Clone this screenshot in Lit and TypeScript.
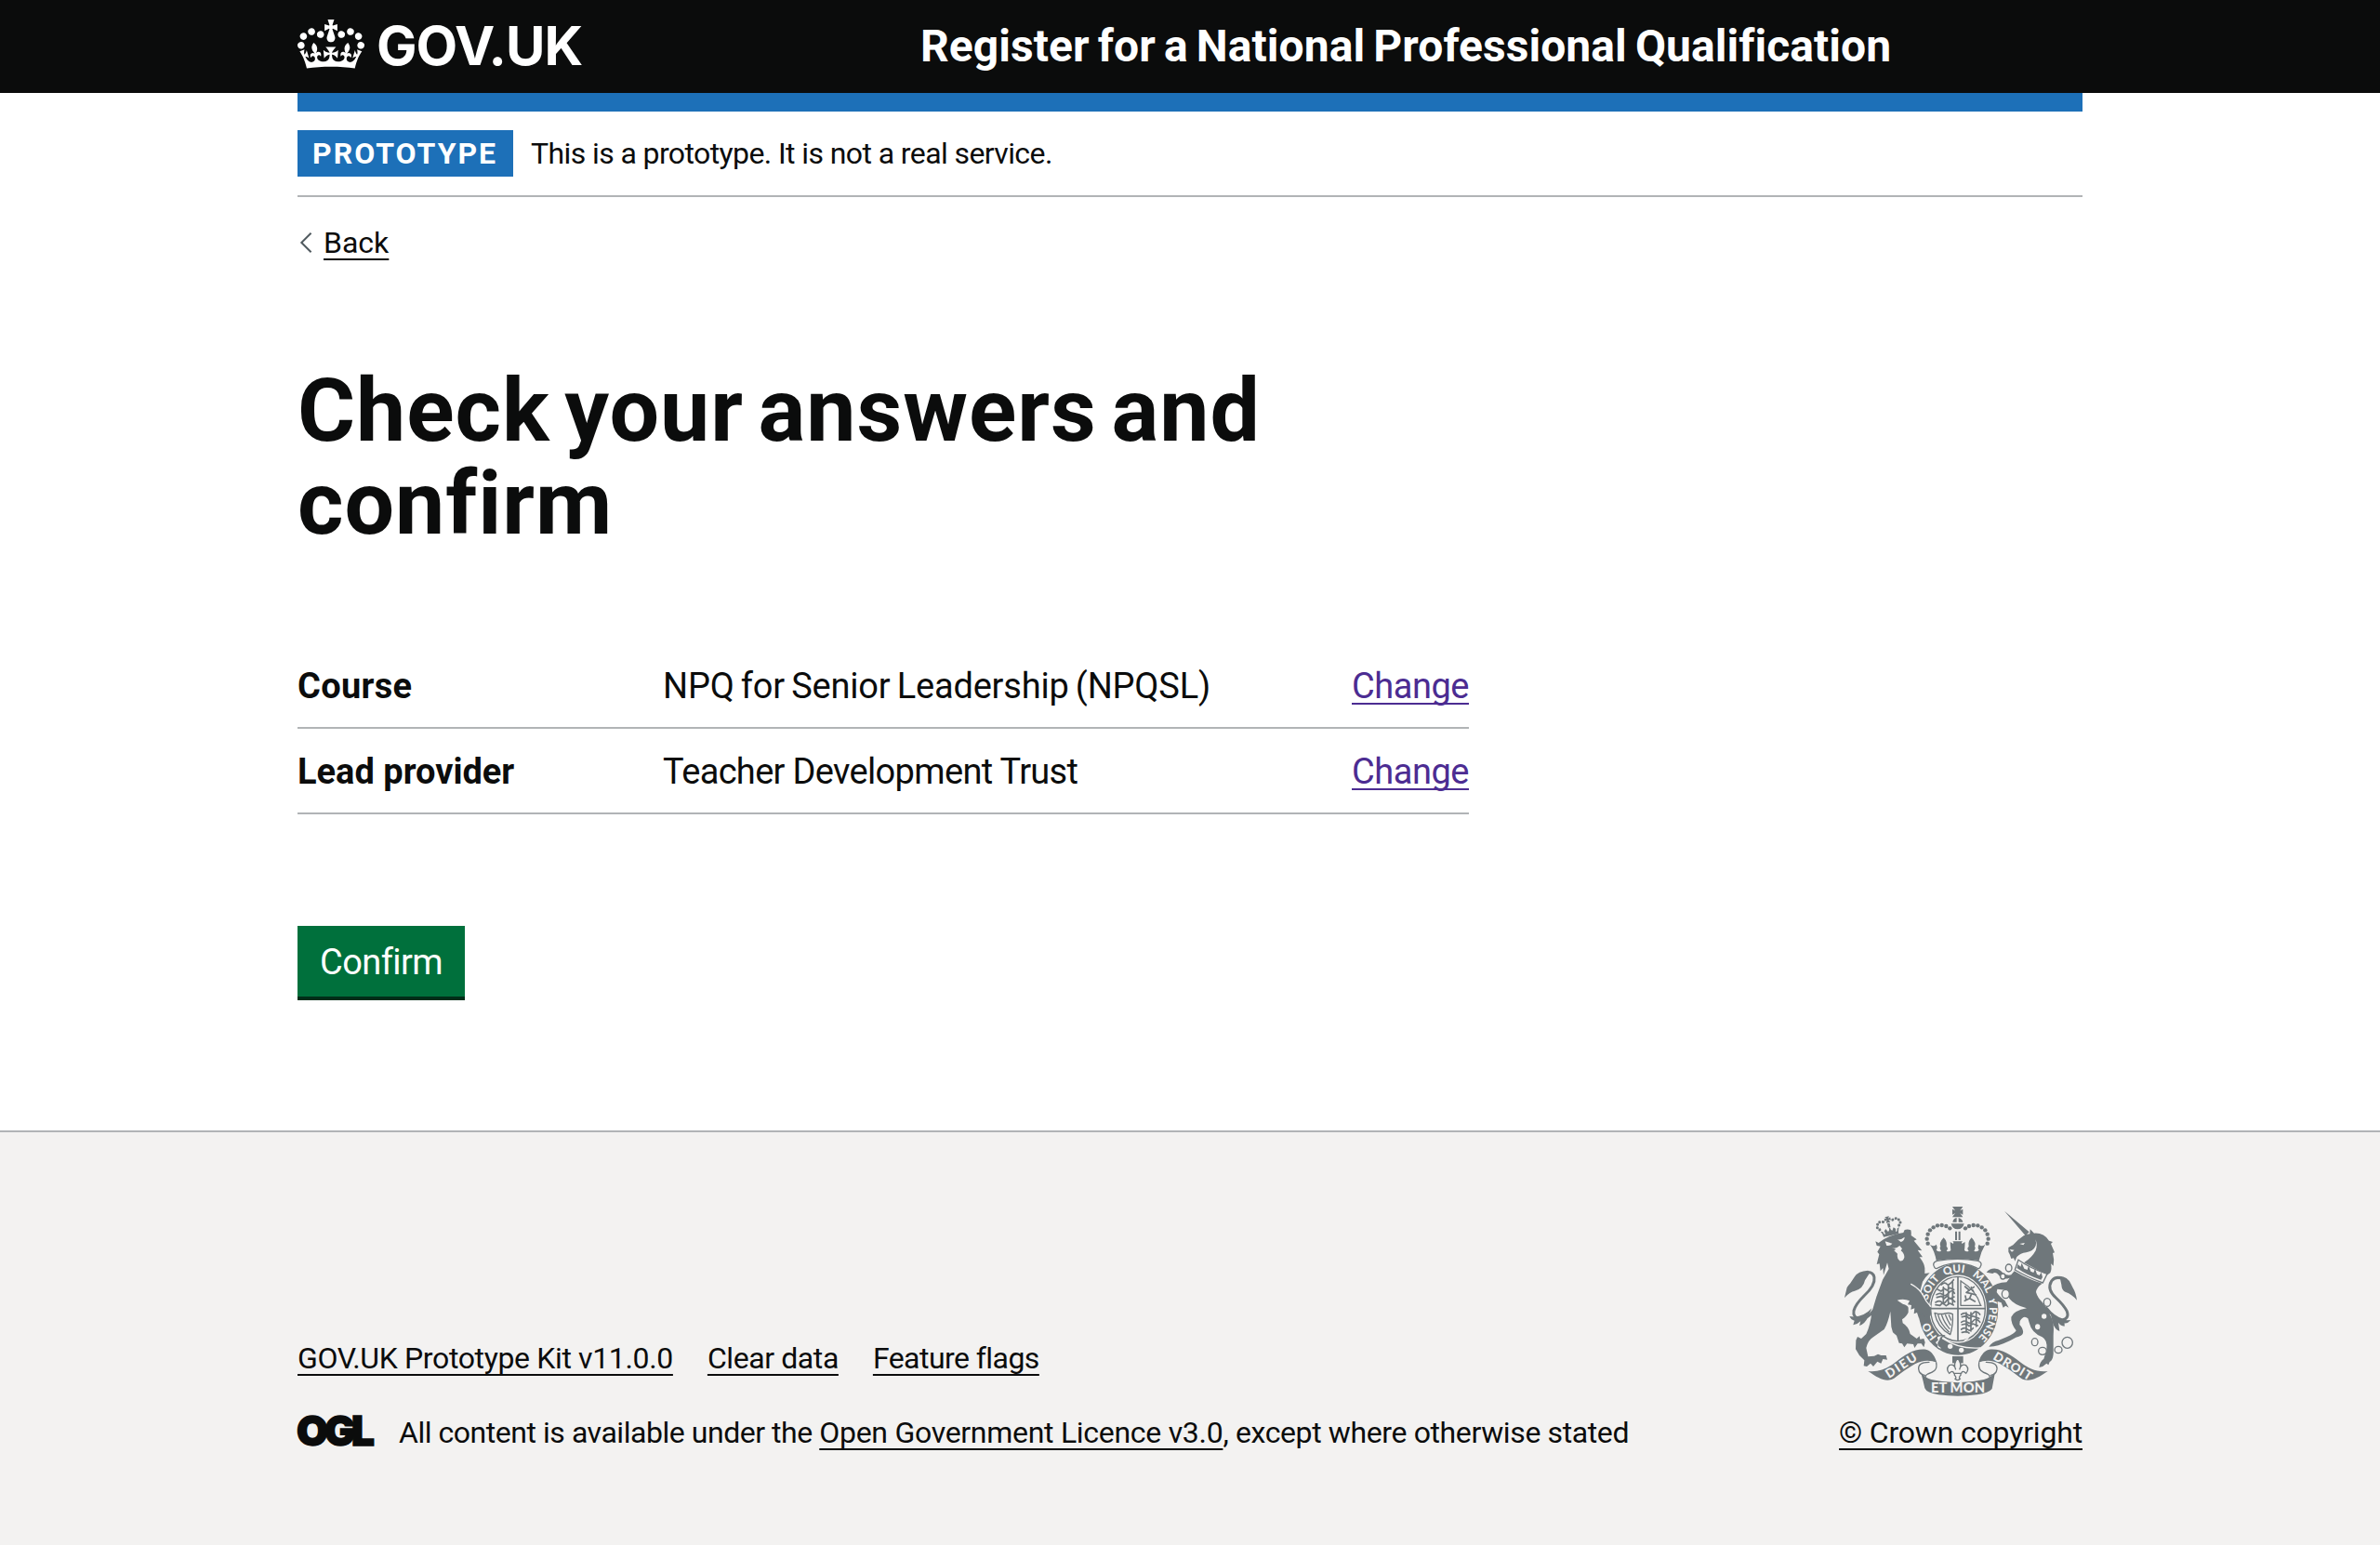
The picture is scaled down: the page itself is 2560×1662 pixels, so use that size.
import { LitElement, html, svg, css } from "lit";
import { customElement } from "lit/decorators.js";

interface Answer {
  key: string;
  keyClass: string;
  value: string;
  valueClass: string;
}

const answers: Answer[] = [
  { key: "Course", keyClass: "key loose", value: "NPQ for Senior Leadership (NPQSL)", valueClass: "value npq" },
  { key: "Lead provider", keyClass: "key", value: "Teacher Development Trust", valueClass: "value trust" },
];

/* Royal crown shown beside the site name. */
@customElement("crown-mark")
class CrownMark extends LitElement {
  static styles = css`
    :host { display: block; width: 72px; height: 53px; }
    svg { display: block; width: 72px; height: 53px; fill: #fff; }
  `;
  render() {
    return html`<svg viewBox="0 0 132 97" preserveAspectRatio="none" aria-hidden="true">
      <path fill-rule="evenodd" d="M25 30.2c3.5 1.5 7.7-.2 9.1-3.7 1.5-3.6-.2-7.8-3.9-9.2-3.6-1.4-7.6.3-9.1 3.9-1.4 3.5.3 7.5 3.9 9zM9 39.5c3.6 1.5 7.8-.2 9.2-3.7 1.5-3.6-.2-7.8-3.9-9.1-3.6-1.5-7.6.2-9.1 3.8-1.4 3.5.3 7.5 3.8 9zM4.4 57.2c3.5 1.5 7.7-.2 9.1-3.8 1.5-3.6-.2-7.7-3.9-9.1-3.5-1.5-7.6.3-9.1 3.8-1.4 3.5.3 7.6 3.9 9.1zm38.3-21.4c3.5 1.5 7.7-.2 9.1-3.8 1.5-3.6-.2-7.7-3.9-9.1-3.6-1.5-7.6.3-9.1 3.8-1.3 3.6.4 7.7 3.9 9.1zm64.4-5.6c-3.6 1.5-7.8-.2-9.1-3.7-1.5-3.6.2-7.8 3.8-9.2 3.6-1.4 7.7.3 9.2 3.9 1.3 3.5-.4 7.5-3.9 9zm15.9 9.3c-3.6 1.5-7.7-.2-9.1-3.7-1.5-3.6.2-7.8 3.7-9.1 3.6-1.5 7.7.2 9.2 3.8 1.5 3.5-.3 7.5-3.8 9zm4.7 17.7c-3.6 1.5-7.8-.2-9.2-3.8-1.5-3.6.2-7.7 3.9-9.1 3.6-1.5 7.7.3 9.2 3.8 1.3 3.5-.4 7.6-3.9 9.1zM89.3 35.8c-3.6 1.5-7.8-.2-9.2-3.8-1.4-3.6.2-7.7 3.9-9.1 3.6-1.5 7.7.3 9.2 3.8 1.4 3.6-.3 7.7-3.9 9.1zM69.7 17.7l8.9 4.7V9.3l-8.9 2.8c-.2-.3-.5-.6-.9-.9L72.4 0H59.6l3.5 11.2c-.3.3-.6.5-.9.9l-8.8-2.8v13.1l8.8-4.7c.3.3.6.7.9.9l-5 15.4v.1c-.2.8-.4 1.6-.4 2.4 0 4.1 3.1 7.5 7 8.1h.2c.3 0 .7.1 1 .1.4 0 .7 0 1-.1h.2c4-.6 7.1-4.1 7.1-8.1 0-.8-.1-1.7-.4-2.4V34l-5.1-15.4c.4-.2.7-.6 1-.9zM66 92.8c16.9 0 32.8 1.1 47.1 3.2 4-16.9 8.9-26.7 14-33.5l-9.6-3.4c1 4.9 1.1 7.2 0 10.2-1.5-1.4-3-4.3-4.2-8.7L108.6 76c2.8-2 5-3.2 7.5-3.3-4.4 9.4-10 11.9-13.6 11.2-4.3-.8-6.3-4.6-5.6-7.9 1-4.7 5.7-5.9 8-.5 4.3-8.7-3-11.4-7.6-8.8 7.1-7.2 7.9-13.5 2.1-21.1-8 6.1-8.1 12.3-4.5 20.8-4.7-5.4-12.1-2.5-9.5 6.2 3.4-5.2 7.9-2 7.2 3.1-.6 4.3-6.4 7.8-13.5 7.2-10.3-.9-10.9-8-11.2-13.8 2.5-.5 7.1 1.8 11 7.3L80.2 60c-4.1 4.4-8 5.3-12.3 5.4 1.4-4.4 8-11.6 8-11.6H55.5s6.4 7.2 7.9 11.6c-4.2-.1-8-1-12.3-5.4l1.4 16.4c3.9-5.5 8.5-7.7 10.9-7.3-.3 5.8-.9 12.8-11.1 13.8-7.2.6-12.9-2.9-13.5-7.2-.7-5 3.8-8.3 7.1-3.1 2.7-8.7-4.6-11.6-9.4-6.2 3.7-8.5 3.6-14.7-4.6-20.8-5.8 7.6-5 13.9 2.2 21.1-4.7-2.6-11.9.1-7.7 8.8 2.3-5.5 7.1-4.2 8.1.5.7 3.3-1.3 7.1-5.7 7.9-3.5.7-9-1.8-13.5-11.2 2.5.1 4.7 1.3 7.5 3.3l-4.7-15.4c-1.2 4.4-2.7 7.2-4.3 8.7-1.1-3-.9-5.3 0-10.2l-9.5 3.4c5 6.9 9.9 16.7 14 33.5 14.8-2.1 30.8-3.2 47.7-3.2z"></path>
    </svg>`;
  }
}

/* Royal coat of arms: crown, garter, shield, lion, unicorn and motto ribbon. */
@customElement("royal-arms")
class RoyalArms extends LitElement {
  static styles = css`
    :host { display: block; width: 250px; height: 204px; }
    svg { display: block; width: 250px; height: 204px; }
    .g { fill: #6f777b; }
    .w { fill: #f3f2f1; }
    .gl { fill: none; stroke: #6f777b; stroke-width: 4; stroke-linecap: round; stroke-linejoin: round; }
    .charge { stroke-width: 5; }
    .tail { stroke-width: 9; }
    .wl { fill: none; stroke: #f3f2f1; stroke-width: 4; stroke-linecap: round; }
    .ring { fill: #f3f2f1; stroke: #6f777b; stroke-width: 4; }
    .motto { fill: #f3f2f1; font-family: Lato, sans-serif; font-weight: 900; font-size: 35px; }
    .ribbon { font-size: 40px; }
    .large { font-size: 44px; }
  `;
  render() {
    const pearls = [[341, 173], [338, 158], [341, 143], [348, 130], [359, 121], [372, 115], [386, 114], [400, 117], [412, 124]];
    const rings = [[602, 252, 10, 12], [583, 279, 8, 9], [592, 336, 12, 14], [726, 363, 11, 13], [686, 491, 10, 12], [711, 520, 13, 12], [762, 516, 12, 11], [791, 493, 17, 18]];
    const words: [string, string][] = [["HO", "11%"], ["SOIT", "29.2%"], ["QUI", "43.4%"], ["MAL", "56.6%"], ["Y", "69.8%"], ["PENSE", "74%"]];
    return html`<svg viewBox="72 54 750 612" aria-hidden="true">
      <defs><path id="garter" d="M439 504A101 119 0 0 1 439 266A101 119 0 0 1 439 504"></path></defs>

      <path class="g" d="M420 54h34l-9 13 9-5v18l-9-5 9 13h-34l9-13-9 5V62l9 5zM421 104q2-12 13-14v14zM440 90q12 3 14 14h-14zM416 109h42q-4 18-21 18t-21-18zM429 134h6v28h-6zM440 134h6v28h-6z"></path>
      ${pearls.map(([x, y]) => svg`<circle class="g" cx=${x} cy=${y} r="6.6"></circle><circle class="g" cx=${874 - x} cy=${y} r="6.6"></circle>`)}
      <path class="g" d="M348 176q12 9 20 0 6 10 0 18 8 8 16 3-7-10-2-14-6-12 10-29 13 14 9 29 8 6 0 14 8 4 14-2l-1-10-1-17 10 6q3-4-2-8h32q-5 4-2 8l10-6-1 17-1 10q6 6 14 2-8-8 0-14-4-15 9-29 16 17 10 29 5 4-2 14 8 5 16-3-6-8 0-18 8 9 20 0-14 24-20 52-69-10-138 0-4-28-20-52z"></path>

      <ellipse class="g" cx="439" cy="385" rx="129" ry="148"></ellipse>
      <ellipse class="w" cx="438" cy="384" rx="93" ry="110"></ellipse>
      <ellipse class="gl" cx="438" cy="384" rx="88" ry="104"></ellipse>
      <path class="ring" d="M371 229q66-12 132 0 17 6 6 22-5 6-14-1-59-27-118 0-9 7-14 1-11-16 8-22z"></path>
      ${words.map(([word, at]) => svg`<text class="motto"><textPath href="#garter" startOffset=${at}>${word}</textPath></text>`)}

      <path class="gl charge" d="M438 282v204M350 383h176"></path>
      <path class="gl" d="M447 293v80h66M511 372q-14-48-64-78"></path>
      <path class="gl charge" d="M384 306q12-10 18-2t22-14M372 321l12 6 9-9 10 6 8-8 14 6M369 338q12-8 20 0t20-6 18 2M370 347l15-4 8 8 10-8 10 8 13-6M366 363q14-8 20 0t16-6 26 4M366 371l14 2 8-8 12 9 12-8 12 6M391 314v54M407 306v62M421 298v68"></path>
      <path class="gl charge" d="M461 312l14 12-10 7 17 4-6 15-16 8M476 323l14-10M482 335l14 4M476 350l17 10M488 328l-7-14M464 352l-2-10"></path>
      <path class="gl" d="M363 397q20 6 33 2t25 2q2 36-8 66-42-24-50-70zM374 404q8 30 35 54M386 405q8 24 25 43M398 404q6 16 16 32M409 404l7 16"></path>
      <path class="gl charge" d="M449 402q12-8 20 0t18-4 22 4M451 410l15-3 8 8 12-8 20 8M449 427q12-8 20 0t18-4 22 4M451 435l15-3 8 8 12-8 16 6M449 450q12-8 20 0t18-4M451 460l15-3 8 5M465 396v64M480 396v60M497 396v45"></path>
      <path class="wl" d="M388 479q54 36 121 31M459 487l12-8"></path>
      <circle class="w" cx="413" cy="505" r="8"></circle><circle class="w" cx="449" cy="517" r="8"></circle>
      <path class="ring" d="M392 470Q362 468 372 484Q358 492 370 500Q368 514 388 514Q384 506 376 502Q372 494 380 486Q382 476 392 470z"></path>

      <path class="g" d="M420 537h35v22h-35z"></path>
      <path class="ring" d="M437 543Q453 562 443 580Q447 560 464 566Q476 578 464 592Q453 580 449 592H425Q421 580 410 592Q398 578 410 566Q427 560 431 580Q421 562 437 543zM427 592h20v6q-8 8-2 12-8 8-16 0 6-4-2-12z"></path>

      <path class="g" d="M318 588c8 12 20 20 34 24q85 20 170 0c14-4 28-12 36-24l-10 54q-10 13-48 19-63 8-125 0-38-6-44-21-5-24-13-52z"></path>
      <text class="motto large" x="351" y="655" textLength="174">ET MON</text>
      <path class="g" d="M148 585c35 4 62-8 90-30 31-25 60-44 97-40 20 5 29 24 35 42-14-6-35-8-51-3-26 7-52 28-87 54-24 14-48 2-84-23z"></path>
      <path class="g" d="M728 585c-35 4-62-8-90-30-31-25-62-44-99-40-20 5-29 24-35 42 14-6 35-8 51-3 26 7 52 28 87 54 24 14 50 2 86-23z"></path>
      <path class="gl" d="M368 558c5 24-10 30-27 36q-10 5-8 16M345 556c-28 0-35 10-34 22q2 18 20 20M506 558c-3 24 10 30 27 36q10 5 8 16M529 556c28 0 36 10 35 22q-2 18-20 20"></path>
      <text class="motto ribbon" transform="translate(215 609) rotate(-33)" textLength="112">DIEU</text>
      <text class="motto ribbon" transform="translate(549 545) rotate(31)" textLength="138">DROIT</text>

      <g transform="rotate(-13 214 118) translate(-3 2)">
        <path class="g" d="M188 126l8 3q0 10 6 9l-2-10 6-6 6 10q6-2 5-10h4q0 8 5 10l6-10 6 6-2 10q6 1 6-9l8-3q-6 10-6 20h-50q0-12-6-20zM212 84h14l-4 7 7-3v10l-7-3 4 9h-14l4-9-7 3V88l7 3zM215 106h8v14h-8z"></path>
        ${[[187, 120], [181, 112], [184, 102], [192, 96], [203, 98], [251, 120], [257, 112], [254, 102], [246, 96], [235, 98]].map(([x, y]) => svg`<circle class="g" cx=${x} cy=${y} r="4.5"></circle>`)}
      </g>

      <g transform="translate(60 30)">
        <path class="g" d="M112 136L122 141Q160 112 202 108L206 99Q216 96 226 100Q228 108 227 117L245 130L236 134L262 166L248 164L264 187L254 187Q270 208 271 222L271 240L287 238Q274 250 264 266L256 296Q264 316 280 330L288 348L292 370L286 382L280 372L268 380L262 366L252 384L246 366L236 370L238 352L226 356L228 342L216 340L222 328Q204 320 182 326L200 338Q216 342 218 350L218 365Q214 376 198 388L200 400Q220 412 224 435L245 450L254 442L256 452L268 450L272 462L268 478L260 466L248 466L238 480L234 468L214 466L205 478L198 466L188 464L180 440L168 430L163 412L160 362Q152 400 140 420L105 445Q88 455 82 480L88 508L108 506L120 500L130 504L146 504L150 518L136 516L130 530L118 524L105 540L96 530L84 540L74 538L76 520L60 504L48 484L49 455L54 444L66 450L82 435Q96 405 100 365L115 315L135 260L155 225L150 205L138 245L136 222L128 232L125 208L116 210L124 178L118 170L128 152L116 150Z"></path>
        <path class="w" d="M143 136L166 143Q160 152 148 150ZM183 130Q194 132 206 122Q206 134 194 138ZM164 156Q178 162 190 150L198 160L194 166Q206 176 205 188Q200 202 190 199Q180 192 183 176L172 166L178 162Z"></path>
        <path class="wl" d="M227 274Q254 288 268 314Q274 330 290 346"></path>
        <path class="gl tail" d="M105 360Q88 386 62 386Q38 382 42 360Q48 338 75 312Q112 278 108 252Q104 234 84 236"></path>
        <path class="g" d="M88 230Q55 232 45 250L30 272Q24 278 20 285L12 318Q30 298 45 296Q72 290 78 262L92 240ZM100 352Q70 385 28 378Q34 390 44 392L40 406Q54 404 64 394L60 408Q78 402 88 380Z"></path>

        <path class="g" d="M528 38L608 106L596 118ZM541 156L556 148Q572 130 590 118Q604 112 610 112L611 97L624 110Q655 108 672 134L684 138L678 144L690 172L684 174Q690 195 686 215L678 208Q682 225 676 238L664 246L650 236L590 204Q625 180 630 150Q622 168 598 172Q580 174 568 186L562 200L558 190L550 192L545 178L541 170Z"></path>
        <path class="w" d="M577 144L594 141L589 148ZM628 130Q636 152 616 168L582 186Q574 192 578 200L592 204Q616 190 629 166Q636 146 628 130ZM545 162L560 164L552 170Z"></path>
        <path class="ring" d="M573 196Q612 224 666 241L652 270Q602 252 562 228Z"></path>
        <path class="g" d="M572 210L580 218L584 206L592 224L602 228L606 214L613 233L622 237L627 224L633 242L641 246L647 236L651 252L646 260Q602 246 568 222Z"></path>
        <path class="g" d="M560 232Q606 260 650 272Q632 284 630 300Q635 318 650 332Q668 352 678 378Q690 400 686 440L686 500Q684 520 674 525L670 535L664 530Q652 542 640 543Q642 525 655 515L664 485Q668 455 650 445Q615 430 608 398L604 385Q590 372 578 394L577 405Q590 418 588 432Q586 442 565 446Q545 458 525 466L508 472Q495 476 478 476Q488 460 510 455L535 445Q560 435 566 424Q548 400 550 380Q558 360 600 352Q560 342 545 322Q535 308 537 294L505 290L503 300Q510 312 530 328L542 350L532 344L524 350L518 334L500 328Q484 308 486 285Q500 270 535 268L545 254Q520 262 510 245Q500 232 490 240L470 236Q482 222 500 224Q516 226 524 240Q540 248 550 244Z"></path>
        <path class="gl tail" d="M664 352Q685 380 715 390Q738 384 730 362Q720 342 694 318Q664 290 680 264Q690 250 710 254"></path>
        <path class="g" d="M706 248Q732 250 742 272L750 288Q758 300 762 326Q745 306 726 300Q713 296 712 276ZM676 366Q700 394 742 390Q732 402 722 400L722 410Q708 408 702 398L706 426Q690 420 684 400Z"></path>
      </g>
      ${rings.map(([x, y, rx, ry]) => svg`<ellipse class="ring" cx=${x} cy=${y} rx=${rx} ry=${ry}></ellipse>`)}
      <circle class="w" cx="716" cy="408" r="8"></circle><ellipse class="w" cx="695" cy="442" rx="8" ry="9"></ellipse>
    </svg>`;
  }
}

@customElement("app-root")
class AppRoot extends LitElement {
  static styles = css`
    :host { display: flex; flex-direction: column; min-height: 1662px; background: #fff; color: #0b0c0c; font: 400 32px/40px Roboto, "Liberation Sans", sans-serif; white-space: nowrap; }
    .container { width: 1920px; margin: 0 auto; }
    a { color: inherit; text-decoration: underline 2px; text-underline-offset: 6px; text-decoration-skip-ink: none; }

    .header { background: #0b0c0c; color: #fff; height: 100px; }
    .header-row { display: grid; grid-template-columns: 670px 1fr; height: 100px; font-weight: 700; }
    .brand { display: flex; padding-top: 21px; gap: 13px; }
    .site { font: 700 58px/60px Inter, sans-serif; letter-spacing: -1px; margin-top: -2px; }
    .service { font-size: 48px; line-height: 60px; padding-top: 20px; letter-spacing: 0.05px; word-spacing: -2.8px; }
    .bar { height: 20px; background: #1d70b8; }

    .phase { display: flex; align-items: center; gap: 19px; padding: 20px 0; border-bottom: 2px solid #b1b4b6; }
    .tag { background: #1d70b8; color: #fff; font-weight: 700; letter-spacing: 2px; height: 40px; width: 216px; padding: 5px 0 5px 16px; }
    .phase-text { letter-spacing: -0.6px; }

    .back { display: flex; align-items: center; gap: 12px; margin-top: 29px; }
    .chevron { width: 16px; height: 22px; fill: none; stroke: #505a5f; stroke-width: 2; }

    .column { width: 1260px; }
    .heading { margin: 111px 0 100px; font-size: 95px; line-height: 100px; font-weight: 700; letter-spacing: 0.95px; word-spacing: -8.9px; }

    .summary { margin: 0; font-size: 38px; line-height: 50px; }
    .row { display: grid; grid-template-columns: 393px 1fr auto; padding: 21px 0 19px; border-bottom: 2px solid #b1b4b6; }
    .key { font-weight: 700; }
    .loose { letter-spacing: 0.3px; }
    .value { margin: 0; }
    .npq { letter-spacing: -0.2px; word-spacing: -2px; }
    .trust { letter-spacing: -0.67px; }
    .change { margin: 0; color: #4c2c92; letter-spacing: -0.47px; text-underline-offset: 5px; }
    .change a { text-underline-offset: 5px; }

    .confirm { display: block; width: 180px; height: 76px; margin: 120px 0 140px; padding: 2px 0 0; border: 0; background: #00703c; box-shadow: 0 4px 0 #002d18; color: #fff; font: 400 38px/50px Roboto, sans-serif; letter-spacing: -0.6px; }

    .footer { flex: 1; background: #f3f2f1; border-top: 2px solid #b1b4b6; margin-top: 4px; }
    .footer-row { display: flex; justify-content: space-between; align-items: flex-end; padding-top: 80px; }
    .links { display: flex; gap: 37px; margin-bottom: 40px; }
    .kit { letter-spacing: -0.36px; }
    .clear { letter-spacing: -0.41px; }
    .flags { letter-spacing: -0.55px; }
    .licence { display: flex; }
    .ogl { width: 82px; height: 33px; margin: 1px 27px 0 0; overflow: visible; }
    .ogl-text { font: 900 44px Inter, sans-serif; fill: #0b0c0c; stroke: #0b0c0c; stroke-width: 1.5px; }
    .intro { letter-spacing: -0.46px; }
    .open { letter-spacing: -0.29px; }
    .except { letter-spacing: -0.38px; }
    .arms { display: flex; flex-direction: column; align-items: center; gap: 19px; }
    .crown { letter-spacing: -0.18px; }
  `;

  render() {
    return html`
      <header class="header">
        <div class="container header-row">
          <div class="brand"><crown-mark></crown-mark><span class="site">GOV.UK</span></div>
          <div class="service">Register for a National Professional Qualification</div>
        </div>
      </header>
      <div class="container">
        <div class="bar"></div>
        <div class="phase"><strong class="tag">PROTOTYPE</strong><span class="phase-text">This is a prototype. It is not a real service.</span></div>
        <div class="back">
          <svg class="chevron" viewBox="0 0 16 22" aria-hidden="true"><path d="M14.6 0.7L4.3 11L14.6 21.3"></path></svg>
          <a>Back</a>
        </div>
        <main class="column">
          <h1 class="heading">Check your answers and<br />confirm</h1>
          <dl class="summary">
            ${answers.map((a) => html`<div class="row"><dt class=${a.keyClass}>${a.key}</dt><dd class=${a.valueClass}>${a.value}</dd><dd class="change"><a>Change</a></dd></div>`)}
          </dl>
          <button class="confirm">Confirm</button>
        </main>
      </div>
      <footer class="footer">
        <div class="container footer-row">
          <div>
            <div class="links"><a class="kit">GOV.UK Prototype Kit v11.0.0</a><a class="clear">Clear data</a><a class="flags">Feature flags</a></div>
            <div class="licence">
              <svg class="ogl" viewBox="0 0 82 33" aria-hidden="true"><text class="ogl-text" x="-1" y="32.5" textLength="84" lengthAdjust="spacing">OGL</text></svg>
              <span><span class="intro">All content is available under the </span><a class="open">Open Government Licence v3.0</a><span class="except">, except where otherwise stated</span></span>
            </div>
          </div>
          <div class="arms"><royal-arms></royal-arms><a class="crown">© Crown copyright</a></div>
        </div>
      </footer>
    `;
  }
}
